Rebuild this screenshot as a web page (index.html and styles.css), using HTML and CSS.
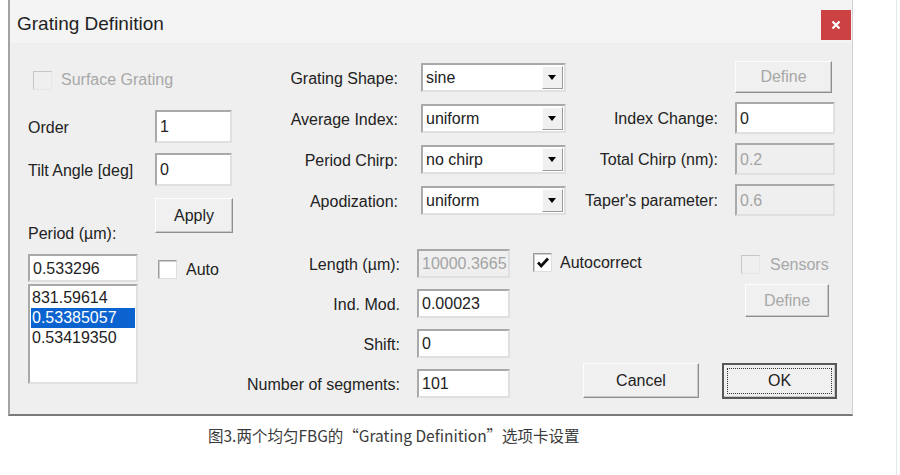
FILE: index.html
```html
<!DOCTYPE html>
<html lang="zh">
<head>
  <meta charset="UTF-8">
  <meta name="viewport" content="width=device-width, initial-scale=1.0">
  <title>Grating Definition</title>
  <link rel="stylesheet" href="styles.css">
</head>
<body>
  <div class="page">
    <div class="dialog">
      <div class="titlebar">
        <span class="title">Grating Definition</span>
        <span class="close">
          <svg width="10" height="10" viewBox="0 0 10 10"><path d="M1.5 1.5 L8.5 8.5 M8.5 1.5 L1.5 8.5" stroke="#fff" stroke-width="2.2"/></svg>
        </span>
      </div>

      <div class="content">
        <!-- left column -->
        <div class="left">
          <div class="check disabled sg"><span class="box"></span>Surface Grating</div>
          <div class="row order"><span class="lbl">Order</span><span class="field small">1</span></div>
          <div class="row tilt"><span class="lbl">Tilt Angle [deg]</span><span class="field small">0</span></div>
          <div class="row apply-row"><span class="lbl period-lbl">Period (µm):</span><span class="btn apply">Apply</span></div>
          <div class="row period-row">
            <span class="field period">0.533296</span>
            <div class="check auto"><span class="box"></span>Auto</div>
          </div>
          <div class="listbox">
            <div class="item">831.59614</div>
            <div class="item sel">0.53385057</div>
            <div class="item">0.53419350</div>
          </div>
        </div>

        <!-- middle + right -->
        <div class="main">
          <div class="top-grid">
            <span class="lbl-r">Grating Shape:</span>
            <div class="field select"><span class="sel-text">sine</span><span class="arrow"></span></div>
            <span></span>
            <span class="btn define disabled">Define</span>

            <span class="lbl-r">Average Index:</span>
            <div class="field select"><span class="sel-text">uniform</span><span class="arrow"></span></div>
            <span class="lbl-r2">Index Change:</span>
            <span class="field wide">0</span>

            <span class="lbl-r">Period Chirp:</span>
            <div class="field select"><span class="sel-text">no chirp</span><span class="arrow"></span></div>
            <span class="lbl-r2">Total Chirp (nm):</span>
            <span class="field wide off">0.2</span>

            <span class="lbl-r">Apodization:</span>
            <div class="field select"><span class="sel-text">uniform</span><span class="arrow"></span></div>
            <span class="lbl-r2">Taper's parameter:</span>
            <span class="field wide off">0.6</span>
          </div>

          <div class="bottom">
            <div class="bottom-grid">
              <span class="lbl-b">Length (µm):</span>
              <span class="field off clip">10000.3665</span>
              <span class="lbl-b">Ind. Mod.</span>
              <span class="field">0.00023</span>
              <span class="lbl-b">Shift:</span>
              <span class="field">0</span>
              <span class="lbl-b">Number of segments:</span>
              <span class="field">101</span>
            </div>

            <div class="side">
              <div class="side-top">
                <div class="check autocorrect">
                  <span class="box">
                    <svg width="14" height="14" viewBox="0 0 14 14"><path d="M2 6.5 L5.2 10 L12 2.5" fill="none" stroke="#111" stroke-width="2.8"/></svg>
                  </span>Autocorrect
                </div>
                <div class="sensors">
                  <div class="check disabled"><span class="box"></span>Sensors</div>
                  <span class="btn define2 disabled">Define</span>
                </div>
              </div>
              <div class="actions">
                <span class="btn cancel">Cancel</span>
                <span class="btn ok"><span class="focus">OK</span></span>
              </div>
            </div>
          </div>
        </div>
      </div>
    </div>

    <div class="caption">图3.两个均匀FBG的“Grating Definition”选项卡设置</div>
  </div>
</body>
</html>
```

FILE: styles.css
```css
body {
  margin: 0;
  background: #fff;
  font-family: "Liberation Sans", Arial, sans-serif;
}
.page {
  width: 896px;
  height: 475px;
  border-right: 1px solid #e4e8ec;
}
.dialog {
  margin-left: 8px;
  width: 845px;
  box-sizing: border-box;
  background: #efefef;
  border-left: 2px solid #a3a3a3;
  border-right: 1px solid #d0d0d0;
  border-bottom: 2px solid #7a7a7a;
}
.titlebar {
  height: 43px;
  box-sizing: border-box;
  background: #f4f4f4;
  display: flex;
  align-items: flex-start;
  justify-content: space-between;
  padding-left: 7px;
}
.title {
  margin-top: 13px;
  font-size: 19px;
  line-height: 22px;
  color: #1f1f1f;
}
.close {
  width: 30px;
  height: 30px;
  margin-top: 10px;
  background: #cc4242;
  display: flex;
  align-items: center;
  justify-content: center;
  margin-right: 1px;
}
.content {
  display: flex;
  padding: 0 0 16px 18px;
  font-size: 16px;
  color: #222;
}

/* common controls */
.field {
  box-sizing: border-box;
  background: #fff;
  border: 2px solid;
  border-color: #a9a9a9 #e0e0e0 #e0e0e0 #a9a9a9;
  padding-left: 3px;
  padding-top: 1px;
  display: flex;
  align-items: center;
  white-space: nowrap;
  overflow: hidden;
}
.field.off {
  background: #efefef;
  color: #a4a4a4;
}
.btn {
  box-sizing: border-box;
  display: flex;
  align-items: center;
  justify-content: center;
  background: #f0f0f0;
  border: 1px solid;
  border-color: #fdfdfd #8e8e8e #8e8e8e #fdfdfd;
  box-shadow: inset -1px -1px #c9c9c9;
}
.btn.disabled {
  color: #a8a8a8;
}
.check {
  display: flex;
  align-items: center;
  gap: 9px;
}
.box {
  width: 19px;
  height: 19px;
  box-sizing: border-box;
  background: #fff;
  border: 1px solid;
  border-color: #9c9c9c #dedede #dedede #9c9c9c;
  box-shadow: inset 1px 1px #cdcdcd;
  display: flex;
  align-items: center;
  justify-content: center;
}
.check.disabled {
  color: #a8a8a8;
}
.check.disabled .box {
  background: #efefef;
  border-color: #c6c6c6 #e6e6e6 #e6e6e6 #c6c6c6;
  box-shadow: none;
}

/* left column */
.left {
  width: 212px;
  flex: none;
}
.sg {
  margin-top: 27px;
  margin-left: 5px;
  height: 20px;
}
.row {
  display: flex;
}
.lbl {
  width: 127px;
  flex: none;
  display: flex;
  align-items: center;
  padding-top: 2px;
}
.field.small {
  width: 77px;
  height: 33px;
}
.order {
  margin-top: 20px;
}
.tilt {
  margin-top: 10px;
}
.apply-row {
  margin-top: 12px;
  align-items: flex-start;
}
.period-lbl {
  margin-top: 25px;
  height: 18px;
}
.btn.apply {
  width: 78px;
  height: 35px;
}
.period-row {
  margin-top: 11px;
  align-items: flex-start;
}
.field.period {
  width: 110px;
  height: 28px;
}
.auto {
  margin-left: 20px;
  margin-top: 6px;
}
.listbox {
  margin-top: 2px;
  width: 110px;
  height: 100px;
  box-sizing: border-box;
  background: #fff;
  border: 2px solid;
  border-color: #a9a9a9 #e0e0e0 #e0e0e0 #a9a9a9;
  padding: 2px 1px 0;
}
.item {
  height: 20px;
  line-height: 20px;
  padding-left: 1px;
}
.item.sel {
  background: #0b63cf;
  color: #fff;
}

/* top grid */
.top-grid {
  margin-top: 18px;
  display: grid;
  grid-template-columns: 181px 145px 169px 100px;
  grid-template-rows: repeat(4, 32px);
  row-gap: 9px;
  align-items: center;
}
.lbl-r {
  text-align: right;
  padding-right: 23px;
  padding-top: 3px;
}
.lbl-r2 {
  text-align: right;
  padding-right: 17px;
  padding-top: 2px;
}
.field.select {
  height: 29px;
  padding-right: 1px;
  padding-top: 0;
}
.sel-text {
  flex: 1;
  padding-top: 2px;
}
.arrow {
  width: 21px;
  height: 23px;
  box-sizing: border-box;
  background: #f0f0f0;
  border: 1px solid;
  border-color: #fdfdfd #9a9a9a #9a9a9a #fdfdfd;
  position: relative;
}
.arrow::after {
  content: "";
  position: absolute;
  left: 5px;
  top: 8px;
  border-left: 4px solid transparent;
  border-right: 4px solid transparent;
  border-top: 5px solid #000;
}
.btn.define {
  width: 97px;
  height: 32px;
}
.field.wide {
  height: 32px;
}

/* bottom part */
.bottom {
  margin-top: 33px;
  display: flex;
}
.bottom-grid {
  display: grid;
  grid-template-columns: 177px 93px;
  grid-template-rows: repeat(4, 29px);
  row-gap: 11px;
  align-items: center;
}
.lbl-b {
  text-align: right;
  padding-right: 17px;
  padding-top: 2px;
}
.bottom-grid .field {
  height: 29px;
}
.field.clip {
  padding-right: 0;
}
.side {
  width: 327px;
  display: flex;
  flex-direction: column;
}
.side-top {
  display: flex;
}
.autocorrect {
  margin-left: 23px;
  margin-top: 4px;
  gap: 8px;
  height: 19px;
}
.sensors {
  margin-left: auto;
  margin-right: 8px;
  width: 84px;
}
.sensors .check {
  margin-left: -4px;
  margin-top: 6px;
  gap: 10px;
}
.btn.define2 {
  margin-top: 10px;
  width: 84px;
  height: 33px;
}
.actions {
  margin-top: auto;
  display: flex;
  align-items: flex-end;
  gap: 23px;
  padding-left: 73px;
  margin-bottom: -1px;
}
.btn.cancel {
  width: 116px;
  height: 35px;
  margin-bottom: 1px;
}
.btn.ok {
  width: 115px;
  height: 36px;
  border: 2px solid #585858;
  padding: 3px;
}
.focus {
  flex: 1;
  align-self: stretch;
  border: 1px dotted #333;
  display: flex;
  align-items: center;
  justify-content: center;
}

.caption {
  margin-top: 9px;
  padding-left: 208px;
  line-height: 20px;
  font-family: "Noto Sans CJK SC", sans-serif;
  font-size: 15.5px;
  color: #3a3a3a;
}
```
